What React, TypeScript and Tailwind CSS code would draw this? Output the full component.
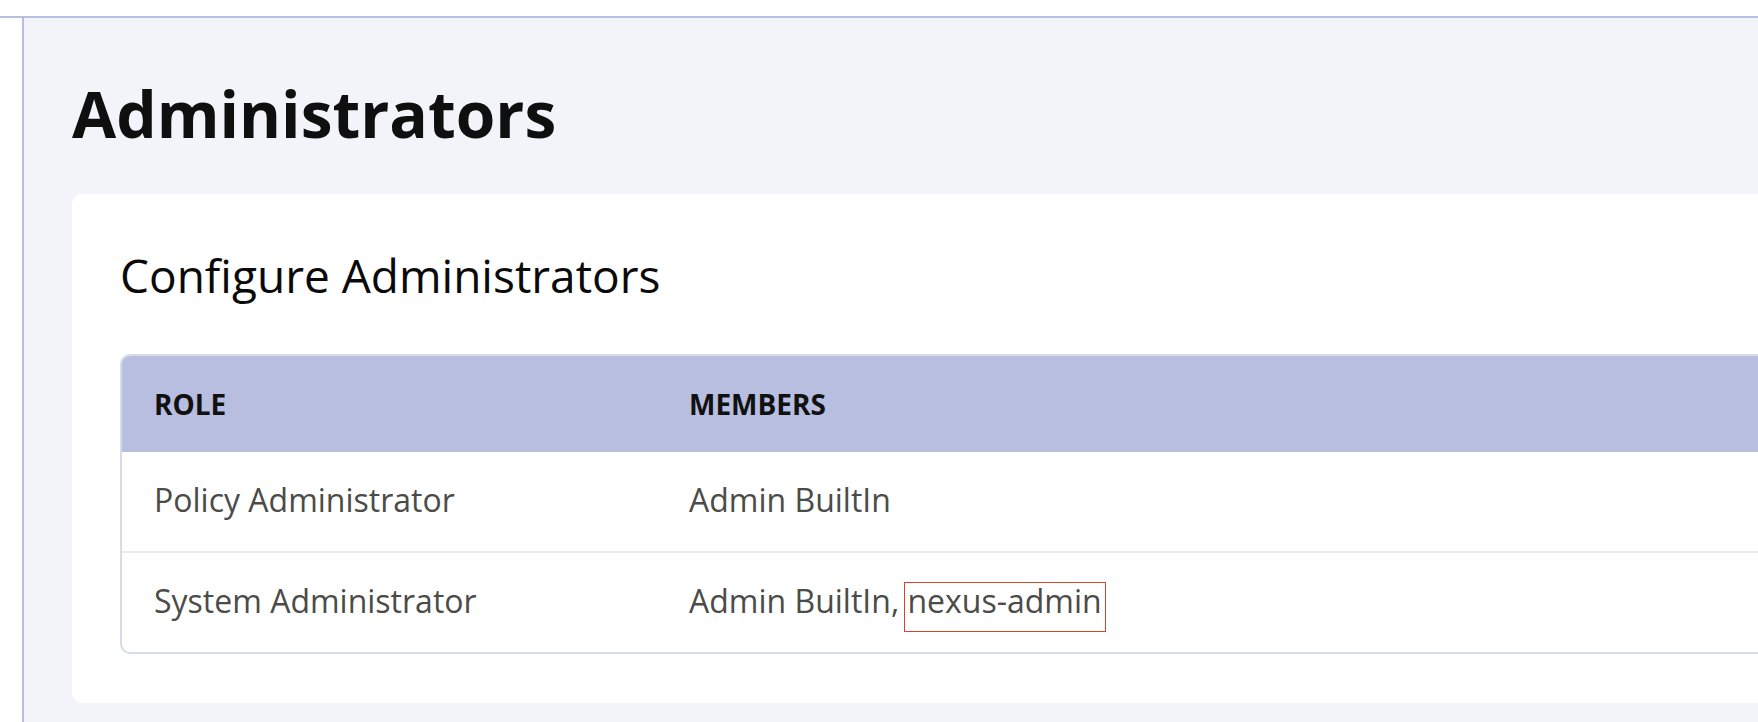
import React from 'react';

const rows = [
    { role: 'Policy Administrator', members: ['Admin BuiltIn'] },
    { role: 'System Administrator', members: ['Admin BuiltIn', 'nexus-admin'] },
];

const App: React.FC = () => {
    return (
        <div className="min-h-screen bg-white pt-4 overflow-hidden" style={{ fontFamily: '"Open Sans", "Noto Sans", sans-serif' }}>
            <div className="flex border-t-2 border-[#b8bee0]">
                <div className="w-[22px] shrink-0 bg-white" />
                <main className="flex-1 min-h-[704px] overflow-hidden border-l-2 border-[#b8bee0] bg-[#f3f4f9] pl-12 pt-12">
                    <h1 className="mb-[33px] text-[64px] leading-[95px] font-bold text-[#0f0f0f]">Administrators</h1>

                    <div className="w-[1800px] rounded-[10px] bg-white px-12 pt-12 pb-[49px]">
                        <h2 className="mb-[46px] text-[46px] leading-[66px] font-medium text-[#0a0a0a]">Configure Administrators</h2>

                        <div className="overflow-hidden rounded-[10px] border-2 border-[#d8dbee]">
                            <table className="w-full border-collapse text-left">
                                <thead>
                                    <tr className="bg-[#b8bee0]">
                                        <th className="w-[535px] px-[32px] py-[27px] text-[28px] leading-[42px] font-bold text-[#111]">ROLE</th>
                                        <th className="px-[32px] py-[27px] text-[28px] leading-[42px] font-bold text-[#111]">MEMBERS</th>
                                    </tr>
                                </thead>
                                <tbody>
                                    {rows.map((row, i) => (
                                        <tr key={row.role} className={i > 0 ? 'border-t-2 border-[#e8ebf3]' : ''}>
                                            <td className="px-[32px] pt-[24px] pb-[27px] text-[32px] leading-[48px] text-[#4b4b47]">{row.role}</td>
                                            <td className="px-[32px] pt-[24px] pb-[27px] text-[32px] leading-[48px] text-[#4b4b47]">
                                                {row.members.map((m, j) => (
                                                    <React.Fragment key={m}>
                                                        {j > 0 && ', '}
                                                        {m === 'nexus-admin' ? (
                                                            <span className="relative">
                                                                {m}
                                                                <span className="absolute top-[3px] -bottom-[10px] -left-[3px] -right-[4px] border border-[#d4452f]" />
                                                            </span>
                                                        ) : (
                                                            m
                                                        )}
                                                    </React.Fragment>
                                                ))}
                                            </td>
                                        </tr>
                                    ))}
                                </tbody>
                            </table>
                        </div>
                    </div>
                </main>
            </div>
        </div>
    );
};

export default App;
